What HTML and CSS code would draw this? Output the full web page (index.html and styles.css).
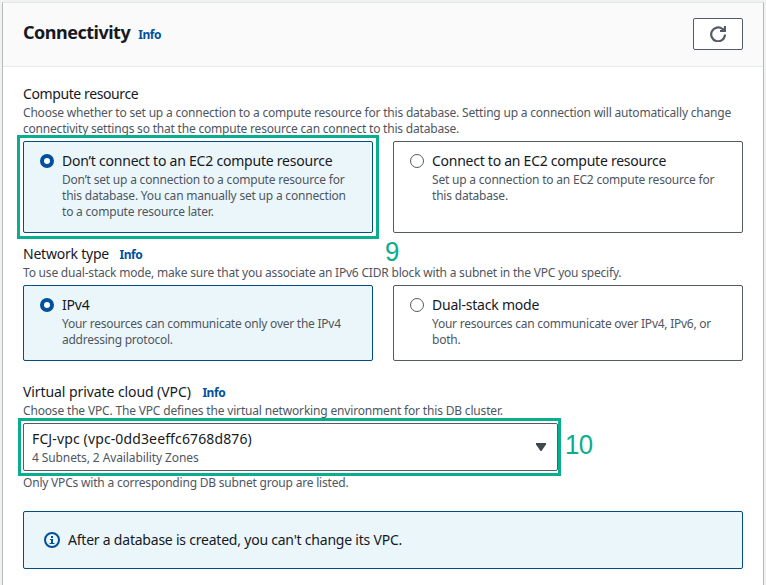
FILE: index.html
```html
<!DOCTYPE html>
<html lang="en">
<head>
<meta charset="utf-8">
<title>Connectivity</title>
<link rel="stylesheet" href="styles.css">
</head>
<body>
<section class="panel">
  <header class="panel-header">
    <h2 class="heading">Connectivity</h2>
    <a class="info info-heading">Info</a>
    <button class="refresh" aria-label="Refresh">
      <svg width="16" height="16" viewBox="0 0 16 16" fill="none" stroke="#545b64" stroke-width="2.200"><path d="M15 8.500A6.900 6.900 0 1 1 12.500 3L14 4.500"/><path d="M15 0v5h-5"/><path d="M11 5l4-4v4z" fill="#545b64" stroke="none"/></svg>
    </button>
  </header>
  <div class="content">
    <div class="field">
      <div class="label label-compute">Compute resource</div>
      <div class="desc">Choose whether to set up a connection to a compute resource for this database. Setting up a connection will automatically change<br>connectivity settings so that the compute resource can connect to this database.</div>
      <div class="tiles">
        <div class="tile selected">
          <span class="radio"></span>
          <div><div class="tile-title">Don’t connect to an EC2 compute resource</div>
          <div class="desc">Don’t set up a connection to a compute resource for<br>this database. You can manually set up a connection<br>to a compute resource later.</div></div>
          <div class="mark mark-tile"><span class="step step-nine">9</span></div>
        </div>
        <div class="tile">
          <span class="radio"></span>
          <div><div class="tile-title title-connect">Connect to an EC2 compute resource</div>
          <div class="desc">Set up a connection to an EC2 compute resource for<br>this database.</div></div>
        </div>
      </div>
    </div>
    <div class="field field-network">
      <div class="label">Network type <a class="info">Info</a></div>
      <div class="desc">To use dual-stack mode, make sure that you associate an IPv6 CIDR block with a subnet in the VPC you specify.</div>
      <div class="tiles">
        <div class="tile selected">
          <span class="radio"></span>
          <div><div class="tile-title">IPv4</div>
          <div class="desc desc-ip">Your resources can communicate only over the IPv4<br>addressing protocol.</div></div>
        </div>
        <div class="tile">
          <span class="radio"></span>
          <div><div class="tile-title">Dual-stack mode</div>
          <div class="desc desc-ip">Your resources can communicate over IPv4, IPv6, or<br>both.</div></div>
        </div>
      </div>
    </div>
    <div class="field field-vpc">
      <div class="label label-vpc">Virtual private cloud (VPC) <a class="info">Info</a></div>
      <div class="desc desc-vpc">Choose the VPC. The VPC defines the virtual networking environment for this DB cluster.</div>
      <div class="select">
        <div><div class="tile-title vpc-id">FCJ-vpc (vpc-0dd3eeffc6768d876)</div>
        <div class="desc zones">4 Subnets, 2 Availability Zones</div></div>
        <svg class="caret" width="10" height="8" viewBox="0 0 10 8"><path d="M0 0h10v1.500L5.500 8h-1L0 1.500z" fill="#414750"/></svg>
        <div class="mark mark-select"><span class="step step-ten">10</span></div>
      </div>
      <div class="desc hint">Only VPCs with a corresponding DB subnet group are listed.</div>
    </div>
    <div class="alert">
      <svg width="16" height="16" viewBox="0 0 16 16"><circle cx="8" cy="8" r="7" fill="none" stroke="#00509c" stroke-width="2"/><path d="M7 4h2v2H7zM6 7h3v4h1.500v1h-5v-1H7V8H6z" fill="#00509c"/></svg>
      <span class="alert-text">After a database is created, you can't change its VPC.</span>
    </div>
  </div>
</section>
</body>
</html>
```
FILE: styles.css
```css
* { box-sizing: border-box; }
body {
  margin: 0;
  padding: 2px 2px 0;
  height: 585px;
  overflow: hidden;
  background: #f0f1f1;
  color: #16191f;
  font: 14px/22px "Noto Sans", "Open Sans", sans-serif;
}
.panel {
  height: 600px;
  border: 1px solid #b4bbbb;
  border-top-color: #e2e5e5;
  background: #fff;
}
.panel-header {
  display: flex;
  align-items: center;
  height: 64px;
  padding: 0 20px 2px;
  border-bottom: 1px solid #e6e9e9;
  background: #fafafa;
}
.heading { margin: -3px 0 0; font-size: 18px; line-height: 22px; font-weight: 700; letter-spacing: -0.5px; }
.info { margin-left: 7px; color: #00509c; font-size: 12px; line-height: 16px; font-weight: 700; letter-spacing: -0.45px; }
.info-heading { margin: 2px 0 0 8px; }
.label-vpc .info { margin-left: 8px; }
.refresh {
  display: flex;
  align-items: center;
  justify-content: center;
  width: 50px;
  height: 32px;
  margin-left: auto;
  padding: 0;
  border: 1px solid #545b64;
  border-radius: 2px;
  background: #fff;
}
.content { padding: 16px 20px 0; }
.label, .tile-title, .alert-text { font-size: 14px; line-height: 22px; letter-spacing: -0.22px; white-space: nowrap; }
.label { height: 22px; }
.label-compute { letter-spacing: -0.4px; }
.label-vpc { letter-spacing: -0.08px; }
.title-connect { letter-spacing: -0.26px; }
.vpc-id { letter-spacing: 0.13px; }
.desc { color: #4f565f; font-size: 12px; line-height: 16px; letter-spacing: -0.2px; white-space: nowrap; }
.desc-ip { letter-spacing: -0.25px; }
.desc-vpc { letter-spacing: -0.17px; }
.zones { letter-spacing: -0.1px; }
.tiles { display: grid; grid-template-columns: 350px 350px; gap: 20px; margin-top: 4px; }
.tile {
  position: relative;
  display: flex;
  padding: 8px 12px 12px 16px;
  border: 1px solid #545b64;
  border-radius: 2px;
}
.tile.selected { border-color: #004f83; background: #ebf6fb; }
.radio {
  flex: none;
  width: 14px;
  height: 14px;
  margin: 4px 8px 0 0;
  border: 1.500px solid #545b64;
  border-radius: 50%;
  background: #fff;
}
.selected .radio { border: 4px solid #00509c; }
.field-network { margin-top: 10px; }
.field-vpc { margin-top: 20px; }
.select {
  position: relative;
  display: flex;
  align-items: center;
  justify-content: space-between;
  width: 535px;
  height: 48px;
  margin-top: 4px;
  padding: 0 11px 0 8px;
  border: 1px solid #545b64;
  border-radius: 2px;
}
.hint { margin-top: 4px; }
.mark { position: absolute; border: 3px solid #09ae8e; }
.mark-tile { inset: -7px -7px -7px -7px; }
.mark-select { inset: -6px -4px -6px -6px; }
.step { position: absolute; color: #09ae8e; font: 28px/32px "Liberation Sans", sans-serif; transform: scaleX(0.92); transform-origin: left; }
.step-nine { left: 365px; top: 98px; }
.step-ten { left: 544px; top: 8px; letter-spacing: -0.5px; }
.alert {
  display: flex;
  align-items: center;
  gap: 8px;
  height: 58px;
  margin-top: 20px;
  padding-left: 20px;
  border: 1px solid #004f83;
  border-radius: 2px;
  background: #ebf6fb;
}
```
